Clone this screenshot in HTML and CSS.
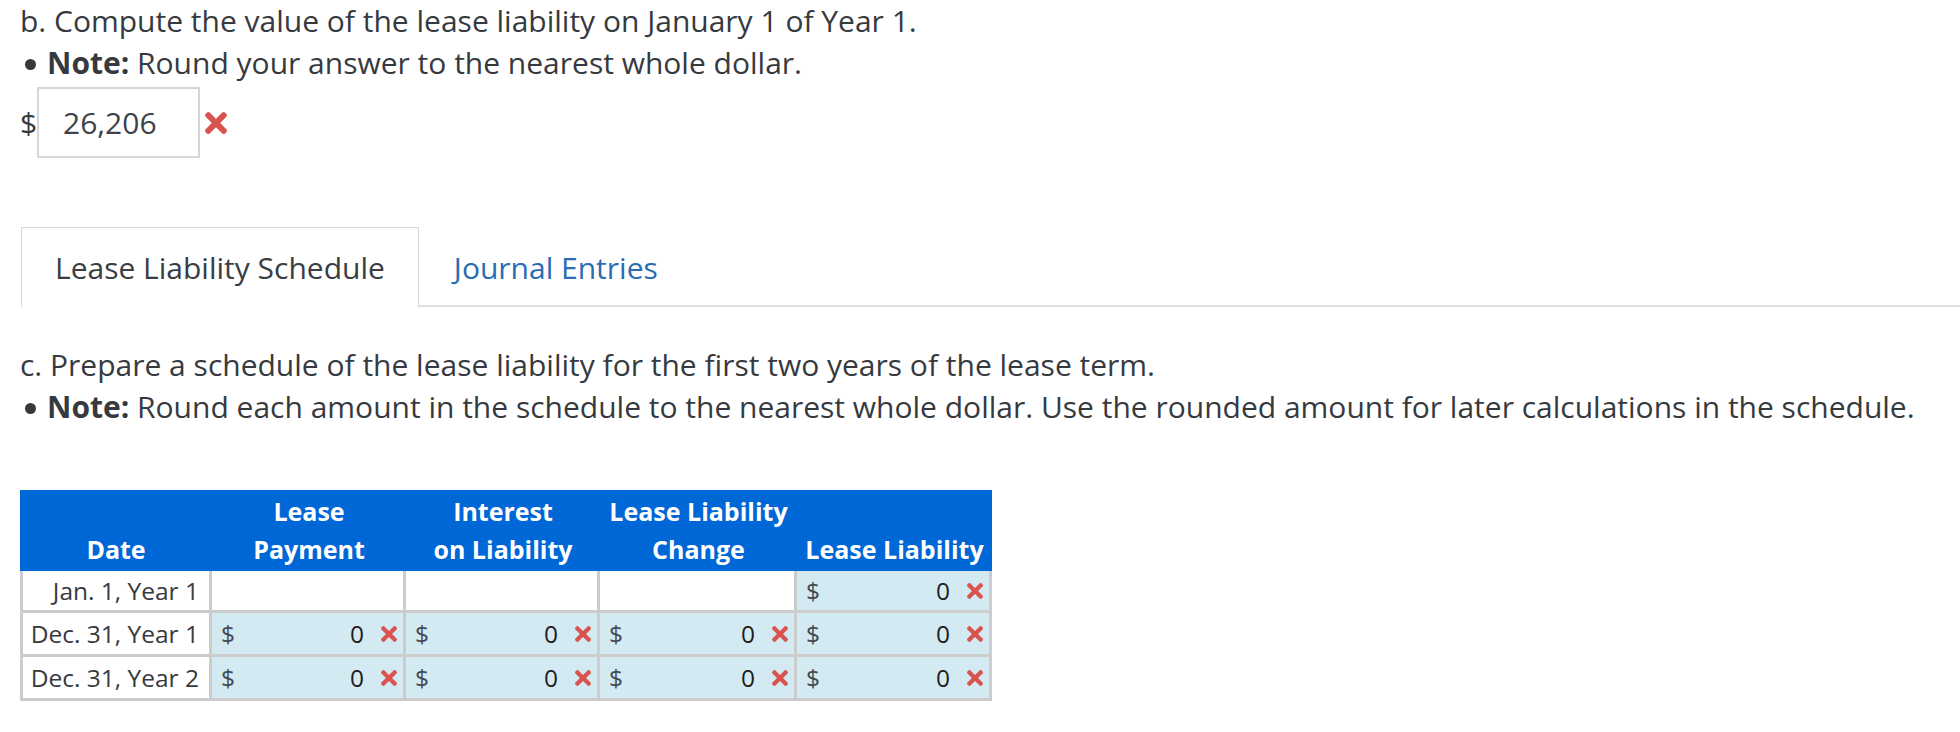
FILE: index.html
```html
<!DOCTYPE html>
<html>
<head>
<meta charset="utf-8">
<link rel="stylesheet" href="styles.css">
</head>
<body>
<div class="page">
  <p class="q">b. Compute the value of the lease liability on January 1 of Year 1.</p>
  <ul class="notes"><li><b>Note:</b> Round your answer to the nearest whole dollar.</li></ul>
  <div class="answer">
    <span class="cur">$</span>
    <span class="box">26,206</span>
    <svg class="x-lg" viewBox="0 80 352 352"><path d="M242.72 256l100.07-100.07c12.28-12.28 12.28-32.19 0-44.48l-22.24-22.24c-12.28-12.28-32.19-12.28-44.48 0L176 189.28 75.93 89.21c-12.28-12.28-32.19-12.28-44.48 0L9.21 111.45c-12.28 12.28-12.28 32.19 0 44.48L109.28 256 9.21 356.07c-12.28 12.28-12.28 32.19 0 44.48l22.24 22.24c12.28 12.28 32.2 12.28 44.48 0L176 322.72l100.07 100.07c12.28 12.28 32.2 12.28 44.48 0l22.24-22.24c12.28-12.28 12.28-32.19 0-44.48L242.72 256z"/></svg>
  </div>

  <div class="tabs">
    <div class="tab active">Lease Liability Schedule</div>
    <div class="tab link">Journal Entries</div>
    <div class="tab-fill"></div>
  </div>

  <p class="q sec">c. Prepare a schedule of the lease liability for the first two years of the lease term.</p>
  <ul class="notes"><li><b>Note:</b> Round each amount in the schedule to the nearest whole dollar. Use the rounded amount for later calculations in the schedule.</li></ul>

  <table class="sched">
    <colgroup>
      <col class="c1"><col class="c2"><col class="c3"><col class="c4"><col class="c5">
    </colgroup>
    <thead>
      <tr>
        <th>Date</th>
        <th>Lease<br>Payment</th>
        <th>Interest<br>on Liability</th>
        <th>Lease Liability<br>Change</th>
        <th>Lease Liability</th>
      </tr>
    </thead>
    <tbody>
      <tr class="r1">
        <td class="date first">Jan. 1, Year 1</td>
        <td class="blank"></td>
        <td class="blank"></td>
        <td class="blank"></td>
        <td class="in"><div class="cell"><span class="d">$</span><span class="v">0</span><svg class="x" viewBox="0 80 352 352"><path d="M242.72 256l100.07-100.07c12.28-12.28 12.28-32.19 0-44.48l-22.24-22.24c-12.28-12.28-32.19-12.28-44.48 0L176 189.28 75.93 89.21c-12.28-12.28-32.19-12.28-44.48 0L9.21 111.45c-12.28 12.28-12.28 32.19 0 44.48L109.28 256 9.21 356.07c-12.28 12.28-12.28 32.19 0 44.48l22.24 22.24c12.28 12.28 32.2 12.28 44.48 0L176 322.72l100.07 100.07c12.28 12.28 32.2 12.28 44.48 0l22.24-22.24c12.28-12.28 12.28-32.19 0-44.48L242.72 256z"/></svg></div></td>
      </tr>
      <tr class="r2">
        <td class="date first">Dec. 31, Year 1</td>
        <td class="in"><div class="cell"><span class="d">$</span><span class="v">0</span><svg class="x" viewBox="0 80 352 352"><path d="M242.72 256l100.07-100.07c12.28-12.28 12.28-32.19 0-44.48l-22.24-22.24c-12.28-12.28-32.19-12.28-44.48 0L176 189.28 75.93 89.21c-12.28-12.28-32.19-12.28-44.48 0L9.21 111.45c-12.28 12.28-12.28 32.19 0 44.48L109.28 256 9.21 356.07c-12.28 12.28-12.28 32.19 0 44.48l22.24 22.24c12.28 12.28 32.2 12.28 44.48 0L176 322.72l100.07 100.07c12.28 12.28 32.2 12.28 44.48 0l22.24-22.24c12.28-12.28 12.28-32.19 0-44.48L242.72 256z"/></svg></div></td>
        <td class="in"><div class="cell"><span class="d">$</span><span class="v">0</span><svg class="x" viewBox="0 80 352 352"><path d="M242.72 256l100.07-100.07c12.28-12.28 12.28-32.19 0-44.48l-22.24-22.24c-12.28-12.28-32.19-12.28-44.48 0L176 189.28 75.93 89.21c-12.28-12.28-32.19-12.28-44.48 0L9.21 111.45c-12.28 12.28-12.28 32.19 0 44.48L109.28 256 9.21 356.07c-12.28 12.28-12.28 32.19 0 44.48l22.24 22.24c12.28 12.28 32.2 12.28 44.48 0L176 322.72l100.07 100.07c12.28 12.28 32.2 12.28 44.48 0l22.24-22.24c12.28-12.28 12.28-32.19 0-44.48L242.72 256z"/></svg></div></td>
        <td class="in"><div class="cell"><span class="d">$</span><span class="v">0</span><svg class="x" viewBox="0 80 352 352"><path d="M242.72 256l100.07-100.07c12.28-12.28 12.28-32.19 0-44.48l-22.24-22.24c-12.28-12.28-32.19-12.28-44.48 0L176 189.28 75.93 89.21c-12.28-12.28-32.19-12.28-44.48 0L9.21 111.45c-12.28 12.28-12.28 32.19 0 44.48L109.28 256 9.21 356.07c-12.28 12.28-12.28 32.19 0 44.48l22.24 22.24c12.28 12.28 32.2 12.28 44.48 0L176 322.72l100.07 100.07c12.28 12.28 32.2 12.28 44.48 0l22.24-22.24c12.28-12.28 12.28-32.19 0-44.48L242.72 256z"/></svg></div></td>
        <td class="in"><div class="cell"><span class="d">$</span><span class="v">0</span><svg class="x" viewBox="0 80 352 352"><path d="M242.72 256l100.07-100.07c12.28-12.28 12.28-32.19 0-44.48l-22.24-22.24c-12.28-12.28-32.19-12.28-44.48 0L176 189.28 75.93 89.21c-12.28-12.28-32.19-12.28-44.48 0L9.21 111.45c-12.28 12.28-12.28 32.19 0 44.48L109.28 256 9.21 356.07c-12.28 12.28-12.28 32.19 0 44.48l22.24 22.24c12.28 12.28 32.2 12.28 44.48 0L176 322.72l100.07 100.07c12.28 12.28 32.2 12.28 44.48 0l22.24-22.24c12.28-12.28 12.28-32.19 0-44.48L242.72 256z"/></svg></div></td>
      </tr>
      <tr class="r3">
        <td class="date first">Dec. 31, Year 2</td>
        <td class="in"><div class="cell"><span class="d">$</span><span class="v">0</span><svg class="x" viewBox="0 80 352 352"><path d="M242.72 256l100.07-100.07c12.28-12.28 12.28-32.19 0-44.48l-22.24-22.24c-12.28-12.28-32.19-12.28-44.48 0L176 189.28 75.93 89.21c-12.28-12.28-32.19-12.28-44.48 0L9.21 111.45c-12.28 12.28-12.28 32.19 0 44.48L109.28 256 9.21 356.07c-12.28 12.28-12.28 32.19 0 44.48l22.24 22.24c12.28 12.28 32.2 12.28 44.48 0L176 322.72l100.07 100.07c12.28 12.28 32.2 12.28 44.48 0l22.24-22.24c12.28-12.28 12.28-32.19 0-44.48L242.72 256z"/></svg></div></td>
        <td class="in"><div class="cell"><span class="d">$</span><span class="v">0</span><svg class="x" viewBox="0 80 352 352"><path d="M242.72 256l100.07-100.07c12.28-12.28 12.28-32.19 0-44.48l-22.24-22.24c-12.28-12.28-32.19-12.28-44.48 0L176 189.28 75.93 89.21c-12.28-12.28-32.19-12.28-44.48 0L9.21 111.45c-12.28 12.28-12.28 32.19 0 44.48L109.28 256 9.21 356.07c-12.28 12.28-12.28 32.19 0 44.48l22.24 22.24c12.28 12.28 32.2 12.28 44.48 0L176 322.72l100.07 100.07c12.28 12.28 32.2 12.28 44.48 0l22.24-22.24c12.28-12.28 12.28-32.19 0-44.48L242.72 256z"/></svg></div></td>
        <td class="in"><div class="cell"><span class="d">$</span><span class="v">0</span><svg class="x" viewBox="0 80 352 352"><path d="M242.72 256l100.07-100.07c12.28-12.28 12.28-32.19 0-44.48l-22.24-22.24c-12.28-12.28-32.19-12.28-44.48 0L176 189.28 75.93 89.21c-12.28-12.28-32.19-12.28-44.48 0L9.21 111.45c-12.28 12.28-12.28 32.19 0 44.48L109.28 256 9.21 356.07c-12.28 12.28-12.28 32.19 0 44.48l22.24 22.24c12.28 12.28 32.2 12.28 44.48 0L176 322.72l100.07 100.07c12.28 12.28 32.2 12.28 44.48 0l22.24-22.24c12.28-12.28 12.28-32.19 0-44.48L242.72 256z"/></svg></div></td>
        <td class="in"><div class="cell"><span class="d">$</span><span class="v">0</span><svg class="x" viewBox="0 80 352 352"><path d="M242.72 256l100.07-100.07c12.28-12.28 12.28-32.19 0-44.48l-22.24-22.24c-12.28-12.28-32.19-12.28-44.48 0L176 189.28 75.93 89.21c-12.28-12.28-32.19-12.28-44.48 0L9.21 111.45c-12.28 12.28-12.28 32.19 0 44.48L109.28 256 9.21 356.07c-12.28 12.28-12.28 32.19 0 44.48l22.24 22.24c12.28 12.28 32.2 12.28 44.48 0L176 322.72l100.07 100.07c12.28 12.28 32.2 12.28 44.48 0l22.24-22.24c12.28-12.28 12.28-32.19 0-44.48L242.72 256z"/></svg></div></td>
      </tr>
    </tbody>
  </table>
</div>
</body>
</html>
```

FILE: styles.css
```css
html, body {
  margin: 0;
  padding: 0;
  background: #ffffff;
}

body {
  font-family: "Open Sans", "Liberation Sans", sans-serif;
  color: #363a3f;
}

.page {
  padding-left: 20px;
}

.q {
  margin: 0;
  font-size: 30px;
  line-height: 42px;
}

.sec {
  margin-top: 37px;
}

.notes {
  list-style: none;
  margin: 0;
  padding: 0;
  font-size: 30px;
  line-height: 42px;
}

.notes li::before {
  content: "";
  display: inline-block;
  width: 11px;
  height: 11px;
  border-radius: 50%;
  background: #363a3f;
  margin: 0 11px 0 5px;
  vertical-align: 4px;
}

.notes b {
  font-weight: 700;
}

.answer {
  display: flex;
  align-items: center;
  margin-top: 3px;
  font-size: 30px;
  line-height: 42px;
}

.cur {
  width: 17px;
}

.box {
  box-sizing: border-box;
  width: 163px;
  height: 71px;
  border: 2px solid #d2d7dc;
  padding-left: 24px;
  display: flex;
  align-items: center;
  color: #3d4349;
}

.x-lg {
  width: 22px;
  height: 22px;
  margin-left: 5px;
  fill: #d9534f;
}

.tabs {
  display: flex;
  margin-top: 69px;
  margin-left: 1px;
}

.tab {
  font-size: 30px;
  line-height: 42px;
}

.tab.active {
  border: 1px solid #d6dade;
  border-bottom: none;
  padding: 19px 33px 18px;
  color: #3a3e43;
}

.tab.link {
  color: #2a6db4;
  padding: 20px 33px 16px 35px;
  border-bottom: 2px solid #dcdfe3;
}

.tab-fill {
  flex: 1;
  border-bottom: 2px solid #dcdfe3;
}

.sched {
  margin-top: 62px;
  border-collapse: separate;
  border-spacing: 0;
  table-layout: fixed;
  width: 972px;
  font-size: 24.5px;
}

.c1 { width: 192px; }
.c2 { width: 194px; }
.c3 { width: 194px; }
.c4 { width: 197px; }
.c5 { width: 195px; }

.sched th {
  background: #0067d6;
  color: #ffffff;
  font-weight: 700;
  font-size: 25px;
  line-height: 38px;
  vertical-align: bottom;
  text-align: center;
  padding: 2px 4px 3px;
}

.sched td {
  box-sizing: border-box;
  border-right: 3px solid #cccccc;
  border-bottom: 3px solid #cccccc;
  padding: 0;
  line-height: 38px;
  vertical-align: middle;
}

.sched td.first {
  border-left: 3px solid #cccccc;
}

.r1 td { height: 42px; }
.r2 td, .r3 td { height: 44px; }

.date {
  text-align: right;
  padding-right: 10px !important;
  color: #363a3f;
  background: #ffffff;
}

.blank {
  background: #ffffff;
}

.in {
  background: #d4eaf2;
}

.cell {
  display: flex;
  align-items: center;
  padding: 0 6px 0 9px;
}

.d {
  color: #454a50;
}

.v {
  flex: 1;
  text-align: right;
  color: #1e1e1e;
  margin-right: 17px;
}

.x {
  width: 16px;
  height: 16px;
  fill: #d9534f;
}
```
